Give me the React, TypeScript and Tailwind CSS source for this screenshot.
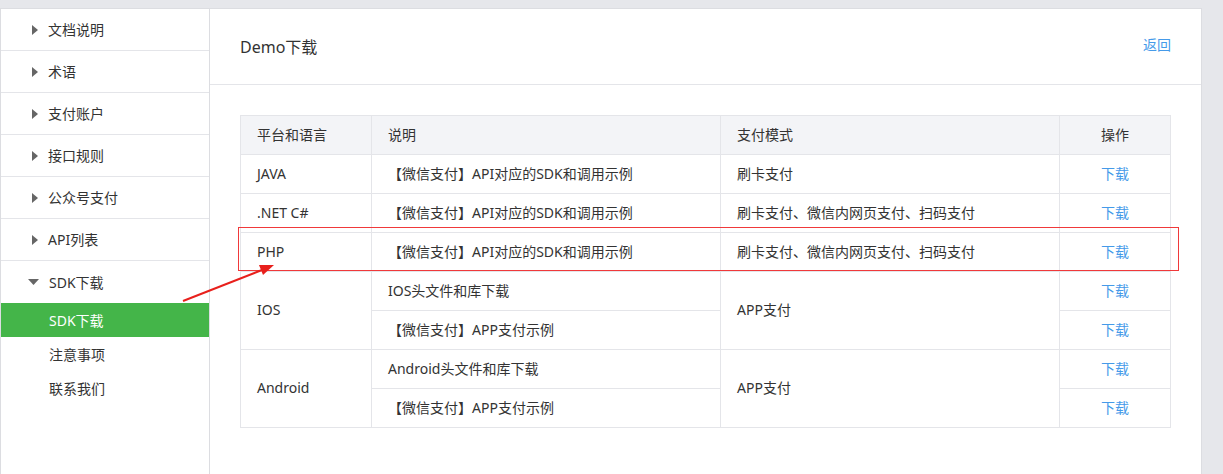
import React from "react";

const menu = ["文档说明", "术语", "支付账户", "接口规则", "公众号支付", "API列表"];

function RightTri() {
  return (
    <svg width="6" height="10" viewBox="0 0 6 10" className="shrink-0">
      <path d="M0 0 L6 5 L0 10 Z" fill="#666" />
    </svg>
  );
}
function DownTri() {
  return (
    <svg width="11" height="6" viewBox="0 0 11 6" className="shrink-0">
      <path d="M0 0 L11 0 L5.5 6 Z" fill="#666" />
    </svg>
  );
}

const desc = "【微信支付】API对应的SDK和调用示例";
const full = "刷卡支付、微信内网页支付、扫码支付";

function Dl() {
  return <span className="text-[#459ae9] cursor-pointer">下载</span>;
}

export default function App() {
  const td = "border border-[#e4e5e9] h-[39px] px-4 pb-[2px] align-middle";
  return (
    <div className="relative h-[474px] w-[1223px] overflow-hidden bg-[#e6e7eb] pt-[8px] font-['Noto_Sans','Noto_Sans_CJK_SC',sans-serif] text-[14px] text-[#333]">
      <div className="flex h-full">
        {/* Sidebar */}
        <div className="w-[210px] h-full bg-white border-t border-l border-r border-[#dcdde1] shrink-0">
          {menu.map((m) => (
            <div key={m} className="h-[42px] border-b border-[#e4e5e9] flex items-center pl-[31px] gap-[10px]">
              <RightTri />
              <span>{m}</span>
            </div>
          ))}
          <div className="h-[42px] flex items-center pl-[27px] gap-[10px]">
            <DownTri />
            <span>SDK下载</span>
          </div>
          <div className="h-[34px] bg-[#44b549] text-white flex items-center pl-[48px]">SDK下载</div>
          <div className="h-[34px] flex items-center pl-[48px]">注意事项</div>
          <div className="h-[34px] flex items-center pl-[48px]">联系我们</div>
        </div>
        {/* Content */}
        <div className="w-[992px] h-full bg-white border-t border-r border-[#dcdde1] shrink-0">
          <div className="h-[76px] border-b border-[#e4e5e9] flex items-center justify-between pl-[30px] pr-[30px]">
            <span className="text-[16px] text-[#333] mt-[1px]">Demo下载</span>
            <span className="text-[#459ae9] text-[14px] -mt-[5px]">返回</span>
          </div>
          <div className="pl-[30px] pt-[30px]">
            <table className="table-fixed border-collapse w-[930px]">
              <colgroup>
                <col className="w-[131px]" />
                <col className="w-[349px]" />
                <col className="w-[339px]" />
                <col className="w-[111px]" />
              </colgroup>
              <thead>
                <tr className="bg-[#f3f4f7]">
                  <th className={`${td} text-left font-normal`}>平台和语言</th>
                  <th className={`${td} text-left font-normal`}>说明</th>
                  <th className={`${td} text-left font-normal`}>支付模式</th>
                  <th className={`${td} text-center font-normal`}>操作</th>
                </tr>
              </thead>
              <tbody>
                <tr>
                  <td className={td}>JAVA</td>
                  <td className={td}>{desc}</td>
                  <td className={td}>刷卡支付</td>
                  <td className={`${td} text-center`}><Dl /></td>
                </tr>
                <tr>
                  <td className={td}>.NET C#</td>
                  <td className={td}>{desc}</td>
                  <td className={td}>{full}</td>
                  <td className={`${td} text-center`}><Dl /></td>
                </tr>
                <tr>
                  <td className={td}>PHP</td>
                  <td className={td}>{desc}</td>
                  <td className={td}>{full}</td>
                  <td className={`${td} text-center`}><Dl /></td>
                </tr>
                <tr>
                  <td className={td} rowSpan={2}>IOS</td>
                  <td className={td}>IOS头文件和库下载</td>
                  <td className={td} rowSpan={2}>APP支付</td>
                  <td className={`${td} text-center`}><Dl /></td>
                </tr>
                <tr>
                  <td className={td}>【微信支付】APP支付示例</td>
                  <td className={`${td} text-center`}><Dl /></td>
                </tr>
                <tr>
                  <td className={td} rowSpan={2}>Android</td>
                  <td className={td}>Android头文件和库下载</td>
                  <td className={td} rowSpan={2}>APP支付</td>
                  <td className={`${td} text-center`}><Dl /></td>
                </tr>
                <tr>
                  <td className={td}>【微信支付】APP支付示例</td>
                  <td className={`${td} text-center`}><Dl /></td>
                </tr>
              </tbody>
            </table>
          </div>
        </div>
      </div>
      {/* Annotation: red box */}
      <div className="absolute left-[238px] top-[227px] w-[941px] h-[44px] border border-[#f0393a] pointer-events-none" />
      {/* Annotation: red arrow */}
      <svg className="absolute left-0 top-0 pointer-events-none" width="1223" height="474">
        <line x1="183" y1="301" x2="262" y2="270" stroke="#e8201c" strokeWidth="2" />
        <path d="M274 265 L259 265 L263 275 Z" fill="#e8201c" />
      </svg>
    </div>
  );
}
